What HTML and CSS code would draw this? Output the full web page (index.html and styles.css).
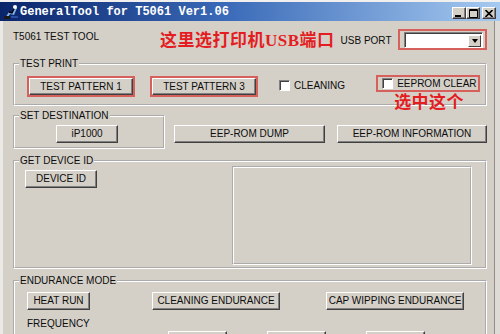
FILE: index.html
```html
<!DOCTYPE html>
<html lang="zh">
<head>
    <meta charset="UTF-8">
    <title>GeneralTool for T5061 Ver1.06</title>
    <link rel="stylesheet" href="styles.css">
</head>
<body>
<div class="window">

    <!-- title bar -->
    <div class="titlebar">
        <svg class="app-icon" width="16" height="16" viewBox="0 0 16 16">
            <path d="M2 14 L6 8 L9 9 L12 3 L14 4 L11 11 L7 10 L4 15 Z" fill="#7fb2e8"/>
            <path d="M6 8 L9 9 L12 3" stroke="#000" stroke-width="1.4" fill="none"/>
            <rect x="1" y="12" width="6" height="3" fill="#1a1a1a"/>
            <circle cx="12" cy="3" r="2" fill="#ffffff"/>
            <rect x="8" y="12" width="7" height="2" fill="#2b4fa0"/>
        </svg>
        <span class="title">GeneralTool for T5061 Ver1.06</span>
        <div class="caption-buttons">
            <span class="cap-btn">
                <svg width="8" height="7" viewBox="0 0 8 7"><rect x="0" y="5" width="6" height="2" fill="#000"/></svg>
            </span>
            <span class="cap-btn">
                <svg width="9" height="9" viewBox="0 0 9 9"><path d="M0.5 0.5 H8.5 V8.5 H0.5 Z M0.5 1.5 H8.5" stroke="#000" fill="none"/></svg>
            </span>
            <span class="cap-btn close">
                <svg width="8" height="7" viewBox="0 0 8 7"><path d="M0.5 0 L7.5 7 M7.5 0 L0.5 7" stroke="#000" stroke-width="1.6"/></svg>
            </span>
        </div>
    </div>

    <div class="client">

        <!-- header -->
        <div class="header-row">
            <span class="tool-name">T5061 TEST TOOL</span>
            <span class="note note-port">这里选打印机USB端口</span>
            <span class="port-label">USB PORT</span>
            <div class="marked combo-mark">
                <div class="combo">
                    <span class="combo-btn"><span class="arrow"></span></span>
                </div>
            </div>
        </div>

        <!-- test print -->
        <fieldset class="group test-print">
            <legend>TEST PRINT</legend>
            <div class="print-row">
                <span class="marked"><button class="btn btn-pattern">TEST PATTERN 1</button></span>
                <span class="marked mark-gap"><button class="btn btn-pattern">TEST PATTERN 3</button></span>
                <label class="check check-cleaning"><span class="box"></span>CLEANING</label>
                <label class="marked check check-eeprom">
                    <span class="box"></span>EEPROM CLEAR
                    <span class="note note-eeprom">选中这个</span>
                </label>
            </div>
        </fieldset>

        <!-- destination + eeprom -->
        <div class="dest-row">
            <fieldset class="group destination">
                <legend>SET DESTINATION</legend>
                <button class="btn btn-ip">iP1000</button>
            </fieldset>
            <button class="btn btn-eep btn-dump">EEP-ROM DUMP</button>
            <button class="btn btn-eep btn-info">EEP-ROM INFORMATION</button>
        </div>

        <!-- device id -->
        <fieldset class="group device">
            <legend>GET DEVICE ID</legend>
            <div class="device-row">
                <button class="btn btn-device">DEVICE ID</button>
                <div class="device-panel"></div>
            </div>
        </fieldset>

        <!-- endurance -->
        <fieldset class="group endurance">
            <legend>ENDURANCE MODE</legend>
            <div class="endurance-row">
                <button class="btn btn-heat">HEAT RUN</button>
                <button class="btn btn-clean">CLEANING ENDURANCE</button>
                <button class="btn btn-cap">CAP WIPPING ENDURANCE</button>
            </div>
            <div class="freq-label">FREQUENCY</div>
            <div class="freq-row">
                <button class="btn btn-freq first">&nbsp;</button>
                <button class="btn btn-freq">&nbsp;</button>
                <button class="btn btn-freq">&nbsp;</button>
            </div>
        </fieldset>

    </div>
</div>
</body>
</html>
```

FILE: styles.css
```css
* {
    box-sizing: border-box;
}
html, body {
    margin: 0;
    padding: 0;
}
body {
    width: 500px;
    height: 334px;
    overflow: hidden;
    background: #dedbd6;
    font-family: "Liberation Sans", Arial, sans-serif;
    font-size: 10px;
    color: #0c0c0c;
    white-space: nowrap;
}

.window {
    width: 500px;
    height: 334px;
    border-top: 2px solid #f1f0ee;
    background: #dedbd6;
}

/* title bar */
.titlebar {
    height: 19px;
    display: flex;
    align-items: center;
    padding-left: 3px;
    background: linear-gradient(to right, #0a246a 0%, #3a6ab8 45%, #a6caf0 100%);
}
.app-icon {
    flex: none;
}
.title {
    margin-left: 1px;
    font-family: "Liberation Mono", "Courier New", monospace;
    font-weight: bold;
    font-size: 12px;
    color: #fff;
}
.caption-buttons {
    display: flex;
    margin-left: auto;
    margin-right: 4px;
    margin-top: 3px;
}
.cap-btn {
    width: 14px;
    height: 12px;
    display: flex;
    align-items: center;
    justify-content: center;
    background: #d4d0c8;
    border: 1px solid;
    border-color: #fff #404040 #404040 #fff;
    box-shadow: inset -1px -1px 0 #808080;
}
.cap-btn.close {
    margin-left: 2px;
}

/* client area */
.client {
    width: 495px;
    height: 313px;
    border-left: 3px solid #ebe9e5;
    border-right: 1px solid #8f8d88;
    padding: 8px 7px 0 10px;
    background: #d4d0c8;
    overflow: hidden;
}

.header-row {
    display: flex;
    align-items: flex-start;
    height: 21px;
}
.tool-name {
    margin-top: 1px;
    line-height: 14px;
    width: 147px;
}
.note {
    font-family: "Liberation Serif", "Noto Sans CJK SC", serif;
    font-weight: bold;
    font-size: 17px;
    line-height: 20px;
    letter-spacing: 0.5px;
    color: #e41d22;
}
.note-port {
    margin-top: 2px;
}
.port-label {
    margin-left: 6px;
    margin-top: 5px;
    line-height: 14px;
}

.marked {
    border: 2px solid #d5605c;
    display: flex;
    align-items: center;
}
.combo-mark {
    margin-left: auto;
    width: 89px;
    height: 21px;
    padding: 1px 2px 0 4px;
    align-items: flex-start;
}
.combo {
    width: 79px;
    height: 16px;
    background: #fff;
    border: 1px solid;
    border-color: #808080 #fff #fff #808080;
    box-shadow: inset 1px 1px 0 #404040;
    display: flex;
    justify-content: flex-end;
    padding: 2px 1px 1px 2px;
}
.combo-btn {
    width: 13px;
    height: 12px;
    background: #d4d0c8;
    border: 1px solid;
    border-color: #fff #404040 #404040 #fff;
    display: flex;
    align-items: center;
    justify-content: center;
}
.arrow {
    width: 0;
    height: 0;
    border-left: 3px solid transparent;
    border-right: 3px solid transparent;
    border-top: 4px solid #000;
}

/* group boxes */
.group {
    margin: 0;
    min-width: 0;
    border: 2px groove #fff;
    padding: 0 6px 0 4px;
}
.group legend {
    padding: 0 1px;
    line-height: 12px;
}

.test-print {
    margin-top: 8px;
    padding-top: 6px;
    padding-bottom: 7px;
}
.print-row {
    display: flex;
    align-items: flex-start;
    padding-left: 8px;
}
.btn {
    font: inherit;
    color: #0c0c0c;
    height: 18px;
    padding: 0;
    line-height: 14px;
    background: #d4d0c8;
    border: 1px solid;
    border-color: #fff #404040 #404040 #fff;
    box-shadow: inset -1px -1px 0 #808080;
}
.btn-pattern {
    width: 104px;
    height: 17px;
}
.mark-gap {
    margin-left: 15px;
}
.check {
    display: flex;
    align-items: center;
    line-height: 13px;
}
.check-cleaning {
    margin-left: 21px;
    margin-top: 3px;
}
.check-eeprom {
    position: relative;
    margin-left: 31px;
    margin-top: -1px;
    height: 17px;
    padding: 0 1px 0 4px;
}
.box {
    width: 11px;
    height: 11px;
    margin-right: 4px;
    background: #fff;
    border: 1px solid;
    border-color: #808080 #fff #fff #808080;
    box-shadow: inset 1px 1px 0 #404040;
}
.note-eeprom {
    position: absolute;
    left: 16px;
    top: 100%;
    margin-top: 3px;
}

/* destination row */
.dest-row {
    display: flex;
    margin-top: 4px;
}
.destination {
    width: 152px;
    padding-top: 3px;
    padding-bottom: 4px;
    display: flex;
    justify-content: center;
}
.btn-ip {
    width: 62px;
    margin-left: -2px;
}
.btn-eep {
    align-self: flex-end;
    margin-bottom: 6px;
    width: 151px;
}
.btn-dump {
    margin-left: 9px;
}
.btn-info {
    margin-left: 12px;
    width: 150px;
}

/* device id */
.device {
    margin-top: 6px;
    padding-bottom: 2px;
    padding-right: 13px;
}
.device-row {
    display: flex;
    align-items: flex-start;
    margin-top: -1px;
}
.btn-device {
    width: 72px;
    margin-left: 6px;
    margin-top: 4px;
}
.device-panel {
    margin-left: auto;
    width: 240px;
    height: 99px;
    border: 2px groove #fff;
}

/* endurance */
.endurance {
    margin-top: 6px;
    padding-top: 5px;
    height: 80px;
}
.endurance-row {
    display: flex;
    padding-left: 8px;
}
.btn-heat {
    width: 63px;
}
.btn-clean {
    width: 128px;
    margin-left: 62px;
}
.btn-cap {
    width: 138px;
    margin-left: 46px;
}
.freq-label {
    margin-top: 7px;
    padding-left: 8px;
    line-height: 14px;
}
.freq-row {
    display: flex;
}
.btn-freq {
    width: 59px;
    margin-left: 40px;
}
.btn-freq.first {
    margin-left: 149px;
}
```
